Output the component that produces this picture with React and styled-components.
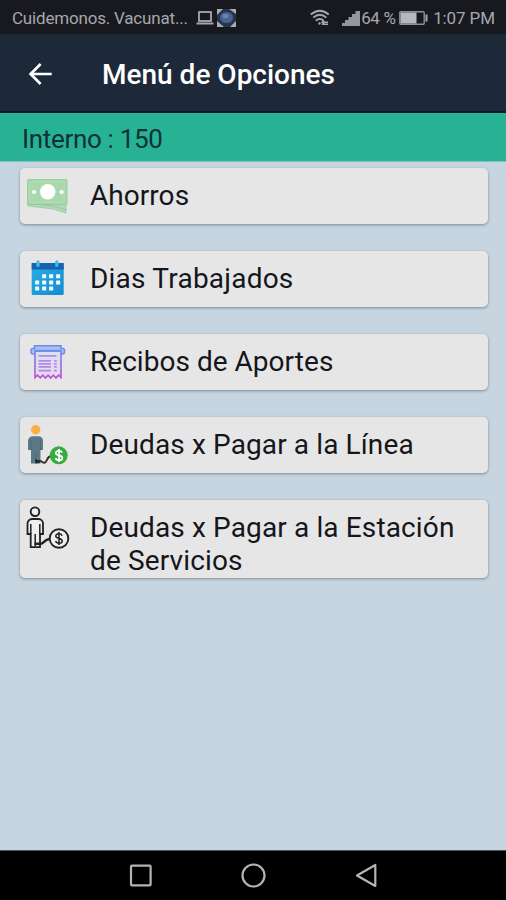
import React from 'react';
import styled, { createGlobalStyle } from 'styled-components';

const GlobalStyle = createGlobalStyle`
  * {
    box-sizing: border-box;
  }
  body {
    margin: 0;
    background: #c7d5e0;
    font-family: Roboto, 'Liberation Sans', sans-serif;
  }
`;

const Screen = styled.div`
  display: flex;
  flex-direction: column;
  width: 506px;
  height: 900px;
  overflow: hidden;
  background: #c7d5e0;
`;

const StatusBar = styled.div`
  display: flex;
  align-items: center;
  justify-content: space-between;
  flex: none;
  height: 34px;
  padding: 2px 11px 0 12px;
  background: #17191f;
  color: #a7a8ab;
  font-size: 17px;
  line-height: 20px;
  white-space: nowrap;

  svg {
    flex: none;
  }
`;

const StatusGroup = styled.div`
  display: flex;
  align-items: center;
`;

const Notice = styled.span`
  width: 184px;
  letter-spacing: -0.19px;
`;

const GallerySlot = styled.span`
  display: flex;
  margin-left: 3px;
`;

const SignalSlot = styled.span`
  display: flex;
  margin-left: 12px;
`;

const Battery = styled.span`
  width: 38px;
  margin-left: 1px;
  letter-spacing: -0.35px;
`;

const Clock = styled.span`
  margin-left: 5px;
  letter-spacing: -0.1px;
`;

const Header = styled.header`
  display: flex;
  align-items: center;
  flex: none;
  height: 79px;
  padding: 2px 28px 0;
  background: #1d2938;
  border-bottom: 2px solid #0e172b;
`;

const Title = styled.h1`
  margin: 3px 0 0 50px;
  color: #fff;
  font-size: 28px;
  font-weight: 500;
  line-height: 36px;
  white-space: nowrap;
`;

const Interno = styled.div`
  flex: none;
  height: 49px;
  padding: 0 22px;
  border-bottom: 1px solid #7dc4bd;
  background: #28b294;
  color: #10303a;
  font-size: 26px;
  line-height: 52px;
  letter-spacing: -0.32px;
`;

const Options = styled.main`
  display: flex;
  flex: 1;
  flex-direction: column;
  gap: 27px;
  padding: 6px 18px 0 20px;
`;

const Card = styled.div`
  display: flex;
  align-items: flex-start;
  min-height: 56px;
  padding: 0 0 1px 6px;
  border-radius: 5px;
  background: #e6e6e6;
  box-shadow: 0 1px 3px rgba(50, 65, 80, 0.5);

  svg {
    flex: none;
    margin-top: 6px;
    overflow: visible;
  }
`;

const Label = styled.div`
  width: 385px;
  margin-left: 22px;
  padding-top: 11px;
  color: #14161c;
  font-size: 28px;
  line-height: 33px;
  letter-spacing: ${props => props.$spacing};
`;

const NavBar = styled.nav`
  display: flex;
  align-items: center;
  flex: none;
  height: 50px;
  padding: 0 128px 0 127px;
  justify-content: space-between;
  border-top: 1px solid #4b5358;
  background: #000;
`;

const Laptop = () => (
  <svg width='18' height='16' viewBox='0 0 18 16' fill='none' stroke='#a7a8ab'>
    <rect x='3' y='2' width='12' height='9' strokeWidth='1.8' />
    <path d='M0.5 13.5h17' strokeWidth='2' />
  </svg>
);

const Gallery = () => (
  <svg width='19' height='18' viewBox='0 0 19 18'>
    <rect width='19' height='18' fill='#a9acb2' />
    <path d='M6 0h6l7 5v7l-6 6H7L0 12V6z' fill='#27344f' />
    <ellipse cx='9.5' cy='8.5' rx='6.5' ry='5.5' fill='#49638f' />
    <ellipse cx='8.5' cy='7' rx='3' ry='2.3' fill='#6d82a8' />
  </svg>
);

const Wifi = () => (
  <svg width='20' height='18' viewBox='0 0 20 18' fill='none' stroke='#a7a8ab' strokeWidth='1.9'>
    <path d='M0.8 5.5Q9.8-2.2 18.8 5.5M3.2 8.6Q9.8 3 16.4 8.6M5.8 11.8Q9.8 8.3 13.8 11.8' />
    <circle cx='9.5' cy='14.5' r='1.2' fill='#a7a8ab' stroke='none' />
    <path d='M12 13.2h6M14 11.7l-2 1.6 2 1.6M12 15.2h6' strokeWidth='1.4' />
  </svg>
);

const Signal = () => (
  <svg width='18' height='16' viewBox='0 0 18 16' fill='#96979b'>
    <path d='M0 13h3v-3h3.5V7H10V4h3.5V1H18v15H0z' />
  </svg>
);

const BatteryIcon = () => (
  <svg width='29' height='14' viewBox='0 0 29 14'>
    <rect x='0.8' y='0.8' width='24.4' height='12.4' rx='1' fill='none' stroke='#8e9096' strokeWidth='1.4' />
    <rect x='1.5' y='1.5' width='16' height='11' fill='#b7b8bd' />
    <rect x='26.5' y='3.5' width='2' height='7' fill='#a7a8ab' />
  </svg>
);

const Back = () => (
  <svg width='24' height='24' viewBox='0 0 24 24' fill='none' stroke='#fff' strokeWidth='2.7'>
    <path d='M23.7 12H2.5M12.6 2L2.6 12l10 10' />
  </svg>
);

const Money = () => (
  <svg width='42' height='42' viewBox='0 0 42 42'>
    <path d='M2 28v4l25 3 13 4V28z' fill='#b2d9b4' stroke='#94c69b' strokeWidth='0.7' />
    <path d='M1.5 29.5l26 2.5 13 4' fill='none' stroke='#8fc297' strokeWidth='0.7' />
    <rect x='1.5' y='5.5' width='39.5' height='25' rx='1' fill='#a9d8ac' stroke='#90c798' strokeWidth='0.8' />
    <path d='M4 8h34v20H4z' fill='none' stroke='#b9e0b9' strokeWidth='0.8' />
    <circle cx='21.7' cy='17.7' r='7.7' fill='#fff' />
    <circle cx='8' cy='18' r='2.1' fill='#fff' />
    <circle cx='35.6' cy='18' r='2.1' fill='#fff' />
  </svg>
);

const days = [
  [18, 25, 32],
  [11, 18, 25, 32],
  [11, 18, 25],
];

const Calendar = () => (
  <svg width='42' height='42' viewBox='0 0 42 42'>
    <defs>
      <linearGradient id='sky' x1='0' y1='0' x2='1' y2='1'>
        <stop offset='0' stopColor='#27aee8' />
        <stop offset='1' stopColor='#168bd0' />
      </linearGradient>
    </defs>
    <rect x='5.7' y='6' width='32' height='32' rx='1' fill='url(#sky)' />
    <rect x='5.7' y='6' width='32' height='6.5' fill='#1763ae' />
    <rect x='10.4' y='3.3' width='3.2' height='6.6' rx='1.5' fill='#43b9e9' />
    <rect x='29.2' y='3.3' width='3.2' height='6.6' rx='1.5' fill='#43b9e9' />
    {days.map((row, i) =>
      row.map(x => (
        <rect key={x} x={x - 1.9} y={17.3 + i * 6.1} width='4.1' height='4' rx='0.5' fill='#f2fbff' />
      ))
    )}
  </svg>
);

const Receipt = () => (
  <svg width='42' height='42' viewBox='0 0 42 42' fill='none' stroke='url(#ink)'>
    <defs>
      <linearGradient id='ink' gradientUnits='userSpaceOnUse' x1='0' y1='5' x2='0' y2='39'>
        <stop offset='0' stopColor='#658df0' />
        <stop offset='0.5' stopColor='#9279e2' />
        <stop offset='1' stopColor='#c34fd8' />
      </linearGradient>
    </defs>
    <path
      d='M8.5 14H7a2 2 0 0 1-2-2v-1.5a2 2 0 0 1 2-2h1.500V5.7h26.500v2.800h1.500a2 2 0 0 1 2 2V12a2 2 0 0 1-2 2H35'
      fill='#a9c2f5'
      strokeWidth='1.5'
    />
    <path
      d='M9 11v26.5l2.6-2.3 2.7 2.7 2.6-2.7 2.6 2.7 2.6-2.7 2.6 2.7 2.6-2.7 2.6 2.7 2.6-2.7 2.5 2.300V11z'
      fill='#e3dcf1'
      strokeWidth='1.7'
    />
    <path d='M8.5 10.8h26.5' stroke='#6f8cec' strokeWidth='2' />
    <path
      d='M12.5 15.8h18M12.5 20.8H25M28 20.8h2.8M12.5 23.8H25M28 23.8h2.8M12.5 26.8H25M28 26.8h2.8M12.5 30.6H25M28 30.6h2.8'
      strokeWidth='1.8'
      strokeOpacity='0.75'
    />
  </svg>
);

const Dollar = ({ color, width }) => (
  <path
    d='M36.2 29.7c-.6-1.3-1.7-1.9-3.3-1.9-1.8 0-3.1.8-3.1 2.2 0 3.3 6.5 1.5 6.5 4.9 0 1.5-1.3 2.3-3.2 2.3-1.8 0-3-.7-3.5-2.1M33 26v13'
    fill='none'
    stroke={color}
    strokeWidth={width}
  />
);

const Debtor = () => (
  <svg width='42' height='42' viewBox='0 0 42 42'>
    <circle cx='9.7' cy='6.7' r='4.7' fill='#f9b044' />
    <path
      d='M7 13.3h5.500a4.500 4.500 0 0 1 4.500 4.500V27h-2.500v13.500H5V27H2v-9.200a4.800 4.800 0 0 1 5-4.500z'
      fill='#5b7886'
    />
    <path d='M5 18v9M14.5 18v9M9.8 29v11.5' stroke='#4b6775' strokeWidth='0.8' />
    <path d='M9.5 36.5l4.5 2.5-4 1z' fill='#1c2933' stroke='#1c2933' />
    <path d='M12 38c3-1.800 3.500 2.300 6.500 1.700s2-6.200 6.500-6.700' fill='none' stroke='#332d31' strokeWidth='1.9' />
    <circle cx='32.7' cy='32.3' r='9' fill='#35ac40' />
    <Dollar color='#fff' width='1.8' />
  </svg>
);

const StationDebtor = () => (
  <svg width='42' height='42' viewBox='0 0 42 42' fill='none' stroke='#202124'>
    <circle cx='9' cy='5.7' r='4.3' fill='#eee' strokeWidth='1.9' />
    <path
      d='M6 13h6.500a4.500 4.500 0 0 1 4.500 4.500V28h-3v13.200H4.700V28H1.500V17.500A4.500 4.500 0 0 1 6 13z'
      fill='#eee'
      strokeWidth='1.8'
    />
    <path d='M4.800 18v10M13.800 18v10M9.200 28v12.500' strokeWidth='1.5' />
    <path d='M8.5 37.800h6c3.500 0 3.500-4.500 9-4.800' strokeWidth='2.4' />
    <circle cx='33' cy='32.5' r='9.3' fill='#eee' strokeWidth='1.9' />
    <Dollar color='#202124' width='1.5' />
  </svg>
);

const Square = () => (
  <svg width='26' height='26' viewBox='0 0 26 26'>
    <rect x='4' y='2.6' width='19.600' height='19.800' rx='1' fill='none' stroke='#b5b3b3' strokeWidth='2.2' />
  </svg>
);

const Circle = () => (
  <svg width='26' height='26' viewBox='0 0 26 26'>
    <circle cx='13.5' cy='12.5' r='11' fill='none' stroke='#b5b3b3' strokeWidth='2.2' />
  </svg>
);

const Triangle = () => (
  <svg width='26' height='26' viewBox='0 0 26 26'>
    <path d='M5 12.500L23.300 2v21z' fill='none' stroke='#b5b3b3' strokeWidth='2.2' strokeLinejoin='round' />
  </svg>
);

const options = [
  { name: 'Ahorros', icon: Money, spacing: '0.05px' },
  { name: 'Dias Trabajados', icon: Calendar, spacing: '0.22px' },
  { name: 'Recibos de Aportes', icon: Receipt, spacing: '0.03px' },
  { name: 'Deudas x Pagar a la Línea', icon: Debtor, spacing: '0.12px' },
  { name: 'Deudas x Pagar a la Estación de Servicios', icon: StationDebtor, spacing: '0.13px' },
];

const App = () => {
  return (
    <>
      <GlobalStyle />
      <Screen>
        <StatusBar>
          <StatusGroup>
            <Notice>Cuidemonos. Vacunat...</Notice>
            <Laptop />
            <GallerySlot>
              <Gallery />
            </GallerySlot>
          </StatusGroup>
          <StatusGroup>
            <Wifi />
            <SignalSlot>
              <Signal />
            </SignalSlot>
            <Battery>64 %</Battery>
            <BatteryIcon />
            <Clock>1:07 PM</Clock>
          </StatusGroup>
        </StatusBar>
        <Header>
          <Back />
          <Title>Menú de Opciones</Title>
        </Header>
        <Interno>Interno : 150</Interno>
        <Options>
          {options.map(({ name, icon: Icon, spacing }) => (
            <Card key={name}>
              <Icon />
              <Label $spacing={spacing}>{name}</Label>
            </Card>
          ))}
        </Options>
        <NavBar>
          <Square />
          <Circle />
          <Triangle />
        </NavBar>
      </Screen>
    </>
  );
};

export default App;
